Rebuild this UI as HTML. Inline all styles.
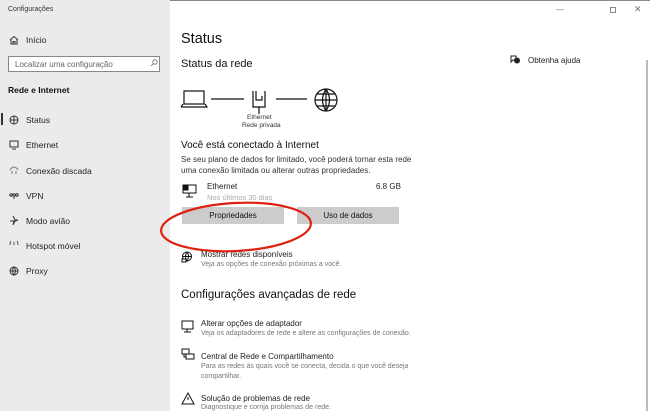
<!DOCTYPE html>
<html><head><meta charset="utf-8"><style>
*{margin:0;padding:0;box-sizing:border-box}
body{width:650px;height:411px;overflow:hidden;background:#fff;font-family:"Liberation Sans",sans-serif;color:#000;position:relative}
.side{position:absolute;left:0;top:0;width:170px;height:411px;background:#ebebeb}
.t{position:absolute;white-space:nowrap}
.g{color:#777}
.nav{font-size:8.5px;color:#222}
.ic{position:absolute}
.btn{position:absolute;background:#cccccc;font-size:8px;text-align:center;line-height:17px;height:17px;color:#111}
</style></head><body>
<div style="position:absolute;left:0;top:0;width:650px;height:1px;background:#888"></div>
<div class="side">
<div class="t" style="left:8px;top:6px;font-size:7px;color:#333">Configurações</div>
<svg class="ic" style="left:9px;top:35px" width="10" height="10" viewBox="0 0 10 10" fill="none" stroke="#333" stroke-width="1"><path d="M1 5L5 1.5L9 5M2 4.5V9H8V4.5M4 9V6.5H6V9"/></svg>
<div class="t nav" style="left:26px;top:35px">Início</div>
<div style="position:absolute;left:8px;top:56px;width:152px;height:16px;border:1px solid #888;background:#fff"></div>
<div class="t" style="left:15px;top:60px;font-size:8px;color:#666">Localizar uma configuração</div>
<svg class="ic" style="left:150px;top:59px" width="8" height="8" viewBox="0 0 8 8" fill="none" stroke="#666" stroke-width=".8"><circle cx="5" cy="3" r="2.2"/><path d="M3.4 4.6L1 7"/></svg>
<div class="t" style="left:8px;top:85px;font-size:8.5px;font-weight:bold;color:#111">Rede e Internet</div>
<div style="position:absolute;left:1px;top:113px;width:2px;height:12px;background:#333"></div>
<div class="t nav" style="left:26px;top:115px">Status</div>
<div class="t nav" style="left:26px;top:140px">Ethernet</div>
<div class="t nav" style="left:26px;top:166px">Conexão discada</div>
<div class="t nav" style="left:26px;top:191px">VPN</div>
<div class="t nav" style="left:26px;top:216px">Modo avião</div>
<div class="t nav" style="left:26px;top:241px">Hotspot móvel</div>
<div class="t nav" style="left:26px;top:266px">Proxy</div>
<svg class="ic" style="left:9px;top:115px" width="10" height="130" viewBox="0 0 10 130" fill="none" stroke="#333" stroke-width="1">
<circle cx="5" cy="5" r="4"/><path d="M1 5H9M5 1V9"/>
<rect x="1" y="26" width="8" height="6"/><path d="M3 34H7"/>
<path d="M1 55Q5 49 9 55M3 56V59M7 56V59" stroke="#777"/>
<circle cx="2" cy="80" r="1.2"/><circle cx="5" cy="80" r="1.2"/><circle cx="8" cy="80" r="1.2"/><path d="M5 81V84"/>
<path d="M4 101L6 105H9L6 106L4 110L5 106H1" />
<path d="M2 126Q0 129 2 132M8 126Q10 129 8 132M5 127V133" stroke="#555"/>
</svg>
<svg class="ic" style="left:9px;top:266px" width="10" height="10" viewBox="0 0 10 10" fill="none" stroke="#333"><circle cx="5" cy="5" r="4"/><path d="M1 5H9M5 1Q2 5 5 9Q8 5 5 1"/></svg>
</div>
<div class="t g" style="left:556px;top:5px;font-size:8px">—</div>
<div style="position:absolute;left:610px;top:7px;width:6px;height:6px;border:1px solid #888"></div>
<div class="t g" style="left:634px;top:4px;font-size:9px">✕</div>
<div style="position:absolute;left:646px;top:60px;width:2px;height:351px;background:#bbb"></div>
<div class="t" style="left:181px;top:31px;font-size:14.5px;color:#111">Status</div>
<div class="t" style="left:181px;top:58px;font-size:11px;color:#111">Status da rede</div>
<svg class="ic" style="left:510px;top:55px" width="10" height="9" viewBox="0 0 10 9"><path d="M1 1H6V5H3L1 7Z" fill="none" stroke="#222"/><circle cx="7" cy="5.5" r="3" fill="#222"/></svg>
<div class="t" style="left:528px;top:56px;font-size:8px;color:#222">Obtenha ajuda</div>
<svg class="ic" style="left:180px;top:88px" width="160" height="28" viewBox="0 0 160 28" fill="none" stroke="#111" stroke-width="1.2">
<rect x="4" y="3" width="20" height="13"/><path d="M1 19H27L25 16M3 16L1 19"/>
<path d="M31 11H64"/>
<path d="M73 3V19H85V3M76 3V12H82V8" /><path d="M79 19V26"/>
<path d="M96 11H127"/>
<circle cx="146" cy="12" r="11"/><path d="M135 12H157M146 1V23M146 1Q139 12 146 23M146 1Q153 12 146 23M137 6H155M137 18H155"/>
</svg>
<div class="t" style="left:247px;top:114px;font-size:6.5px;color:#333">Ethernet</div>
<div class="t" style="left:242px;top:122px;font-size:6.5px;color:#333">Rede privada</div>
<div class="t" style="left:181px;top:140px;font-size:10px;color:#111">Você está conectado à Internet</div>
<div class="t" style="left:181px;top:155px;font-size:8px;color:#333">Se seu plano de dados for limitado, você poderá tornar esta rede</div>
<div class="t" style="left:181px;top:166px;font-size:8px;color:#333">uma conexão limitada ou alterar outras propriedades.</div>
<svg class="ic" style="left:182px;top:184px" width="16" height="14" viewBox="0 0 16 14" fill="none" stroke="#111"><rect x="1" y="1" width="13" height="8"/><rect x="2" y="2" width="4" height="4" fill="#111"/><path d="M7 9V13M4 13H11"/></svg>
<div class="t" style="left:207px;top:182px;font-size:8px;color:#222">Ethernet</div>
<div class="t" style="left:376px;top:182px;font-size:8px;color:#222">6.8 GB</div>
<div class="t g" style="left:207px;top:193px;font-size:7.5px;color:#aaa">Nos últimos 30 dias</div>
<div class="btn" style="left:182px;top:207px;width:102px">Propriedades</div>
<div class="btn" style="left:297px;top:207px;width:102px">Uso de dados</div>
<svg class="ic" style="left:155px;top:190px" width="160" height="75" viewBox="0 0 160 75"><ellipse cx="81" cy="37" rx="75" ry="24" fill="none" stroke="#d21" stroke-width="2.2" transform="rotate(-3 81 37)"/></svg>
<svg class="ic" style="left:181px;top:251px" width="12" height="12" viewBox="0 0 12 12" fill="none" stroke="#111"><circle cx="6" cy="5.5" r="4.5"/><path d="M1.5 5.5H10.5M6 1Q3 5.5 6 10Q9 5.5 6 1"/><rect x="1" y="8" width="4" height="3" fill="#fff"/></svg>
<div class="t" style="left:201px;top:250px;font-size:8px;color:#222">Mostrar redes disponíveis</div>
<div class="t g" style="left:201px;top:261px;font-size:7px">Veja as opções de conexão próximas a você.</div>
<div class="t" style="left:181px;top:289px;font-size:11.5px;color:#111">Configurações avançadas de rede</div>
<svg class="ic" style="left:181px;top:320px" width="14" height="91" viewBox="0 0 14 91" fill="none" stroke="#111">
<rect x="1" y="1" width="11" height="8"/><path d="M6 9V12M3 12H10"/>
<rect x="1" y="29" width="7" height="5"/><rect x="5" y="34" width="8" height="5"/><path d="M3 34V37H5"/>
<path d="M7 73L1 84H13Z"/><path d="M7 77V80"/>
</svg>
<div class="t" style="left:201px;top:319px;font-size:8px;color:#222">Alterar opções de adaptador</div>
<div class="t g" style="left:201px;top:330px;font-size:7px">Veja os adaptadores de rede e altere as configurações de conexão.</div>
<div class="t" style="left:201px;top:352px;font-size:8px;color:#222">Central de Rede e Compartilhamento</div>
<div class="t g" style="left:201px;top:363px;font-size:7px">Para as redes às quais você se conecta, decida o que você deseja</div>
<div class="t g" style="left:201px;top:373px;font-size:7px">compartilhar.</div>
<div class="t" style="left:201px;top:394px;font-size:8px;color:#222">Solução de problemas de rede</div>
<div class="t g" style="left:201px;top:404px;font-size:7px">Diagnostique e corrija problemas de rede.</div>
</body></html>
